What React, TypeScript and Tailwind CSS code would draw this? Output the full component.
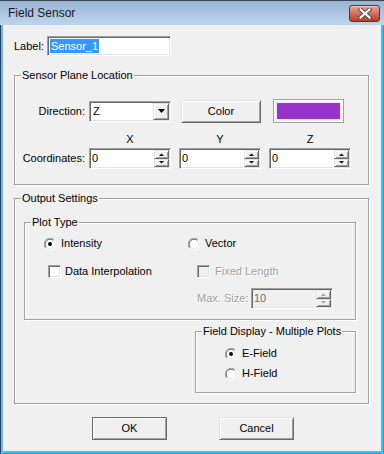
import React from "react";

const SUNKEN =
  "border border-t-[#a0a0a0] border-l-[#a0a0a0] border-b-white border-r-white shadow-[inset_1px_1px_0_#696969,inset_-1px_-1px_0_#e3e3e3] p-[1px]";
const RAISED =
  "border border-t-[#e3e3e3] border-l-[#e3e3e3] border-b-[#696969] border-r-[#696969] shadow-[inset_1px_1px_0_#fff,inset_-1px_-1px_0_#a0a0a0] bg-[#f0f0f0]";
const ETCHED = "relative border border-[#a0a0a0] shadow-[inset_1px_1px_0_#fff,1px_1px_0_#fff]";

function GroupTitle({ children }: { children: React.ReactNode }) {
  return (
    <span className="absolute top-[-7px] left-[6px] px-[1px] bg-[#f0f0f0] leading-[13px] whitespace-nowrap">
      {children}
    </span>
  );
}

function Arrow({ up, color = "#000" }: { up?: boolean; color?: string }) {
  return (
    <svg width="5" height="3" viewBox="0 0 5 3">
      <path d={up ? "M0 3 L5 3 L2.5 0.5 Z" : "M0 0 L5 0 L2.5 2.5 Z"} fill={color} />
    </svg>
  );
}

function Spin({ value, disabled }: { value: string; disabled?: boolean }) {
  return (
    <div className={`${SUNKEN} w-[82px] h-[21px] flex ${disabled ? "bg-[#f0f0f0]" : "bg-white"}`}>
      <div className={`flex-1 pl-[1px] leading-[17px] ${disabled ? "text-[#6d6d6d]" : ""}`}>{value}</div>
      <div className="flex flex-col w-[15px]">
        <div className={`${RAISED} flex-1 flex items-center justify-center`}>
          <Arrow up color={disabled ? "#a0a0a0" : "#000"} />
        </div>
        <div className={`${RAISED} flex-1 flex items-center justify-center`}>
          <Arrow color={disabled ? "#a0a0a0" : "#000"} />
        </div>
      </div>
    </div>
  );
}

function Radio({ checked }: { checked?: boolean }) {
  return (
    <svg width="12" height="12" viewBox="0 0 12 12" className="shrink-0">
      <circle cx="6" cy="6" r="5.5" fill="#fff" />
      <path d="M1.76 10.24 A6 6 0 0 1 10.24 1.76" transform="translate(0 0)" stroke="#a0a0a0" fill="none" />
      <path d="M10.24 1.76 A6 6 0 0 1 1.76 10.24" stroke="#fff" fill="none" />
      <path d="M2.47 9.53 A5 5 0 0 1 9.53 2.47" stroke="#696969" fill="none" />
      <path d="M9.53 2.47 A5 5 0 0 1 2.47 9.53" stroke="#e3e3e3" fill="none" />
      {checked && <circle cx="6" cy="6" r="2" fill="#000" />}
    </svg>
  );
}

function Check({ disabled }: { disabled?: boolean }) {
  return (
    <div className={`${SUNKEN} w-[13px] h-[13px] shrink-0 ${disabled ? "bg-[#f0f0f0]" : "bg-white"}`} />
  );
}

export default function App() {
  return (
    <div className="w-[384px] h-[454px] relative overflow-hidden bg-[#f0f0f0] text-[11px] leading-[13px] text-black font-['Liberation_Sans',Arial,sans-serif] shadow-[inset_1px_0_0_#2a4466,inset_3px_0_0_#6eb3ea,inset_-1px_0_0_#1f9fd8,inset_-3px_0_0_#34c4f2,inset_0_-1px_0_#1f9fd8,inset_0_-3px_0_#34c4f2]">
      {/* Title bar */}
      <div className="h-[25px] border-t border-[#3a4656] bg-gradient-to-b from-[#98b4d4] to-[#bed5ee] flex items-start justify-between pl-[8px] pr-[4px]">
        <span className="mt-[5px] text-[12px] leading-[14px] text-[#1a1a1a]">Field Sensor</span>
        <div className="mt-[4px] w-[31px] h-[17px] rounded-[3px] border border-[#6a2d2a] bg-gradient-to-b from-[#e6a795] via-[#d0705c] to-[#b93a22] flex items-center justify-center shadow-[inset_0_1px_0_#f3c8bb]">
          <svg width="14" height="11" viewBox="0 0 14 11">
            <path d="M2.5 1.5 L11.5 9.5 M11.5 1.5 L2.5 9.5" stroke="#4a4a4a" strokeWidth="4" strokeLinecap="square" />
            <path d="M2.5 1.5 L11.5 9.5 M11.5 1.5 L2.5 9.5" stroke="#fff" strokeWidth="2.2" strokeLinecap="square" />
          </svg>
        </div>
      </div>

      {/* Body */}
      <div className="flex flex-col pl-[14px]">
        {/* Label row */}
        <div className="mt-[11px] h-[20px] flex items-center">
          <span className="w-[33px]">Label:</span>
          <div className={`${SUNKEN} bg-white w-[124px] h-[20px] flex items-center pl-[2px]`}>
            <span className="bg-[#3399ff] text-white leading-[14px] px-[1px]">Sensor_1</span>
          </div>
        </div>

        {/* Sensor Plane Location */}
        <div className={`${ETCHED} mt-[19px] w-[355px] h-[110px] pt-[23px]`}>
          <GroupTitle>Sensor Plane Location</GroupTitle>
          <div className="flex items-center h-[24px]">
            <span className="w-[74px] text-right pr-[4px]">Direction:</span>
            <div className={`${SUNKEN} bg-white w-[82px] h-[21px] flex`}>
              <span className="flex-1 pl-[2px] leading-[17px]">Z</span>
              <div className={`${RAISED} w-[16px] flex items-center justify-center`}>
                <svg width="7" height="4" viewBox="0 0 7 4">
                  <path d="M0 0 L7 0 L3.5 4 Z" fill="#000" />
                </svg>
              </div>
            </div>
            <div className={`${RAISED} ml-[10px] w-[80px] h-[23px] flex items-center justify-center`}>Color</div>
            <div className="ml-[12px] w-[71px] h-[24px] border border-[#a0a0a0] shadow-[inset_1px_1px_0_#fff,inset_-1px_-1px_0_#fff] flex items-center justify-center">
              <div className="w-[63px] h-[16px] bg-[#9932cc]" />
            </div>
          </div>
          <div className="flex mt-[10px] h-[13px]">
            <div className="w-[74px]" />
            <div className="w-[82px] text-center">X</div>
            <div className="w-[82px] ml-[8px] text-center">Y</div>
            <div className="w-[82px] ml-[8px] text-center">Z</div>
          </div>
          <div className="flex items-center mt-[2px] h-[21px]">
            <span className="w-[74px] text-right pr-[4px]">Coordinates:</span>
            <Spin value="0" />
            <div className="ml-[8px]">
              <Spin value="0" />
            </div>
            <div className="ml-[8px]">
              <Spin value="0" />
            </div>
          </div>
        </div>

        {/* Output Settings */}
        <div className={`${ETCHED} mt-[13px] w-[355px] h-[206px] pt-[23px] pl-[9px]`}>
          <GroupTitle>Output Settings</GroupTitle>

          {/* Plot Type */}
          <div className={`${ETCHED} w-[332px] h-[98px] pt-[14px]`}>
            <GroupTitle>Plot Type</GroupTitle>
            <div className="flex items-center h-[13px]">
              <div className="w-[163px] pl-[19px] flex items-center">
                <Radio checked />
                <span className="ml-[5px]">Intensity</span>
              </div>
              <Radio />
              <span className="ml-[5px]">Vector</span>
            </div>
            <div className="flex items-center h-[13px] mt-[15px]">
              <div className="w-[172px] pl-[23px] flex items-center">
                <Check />
                <span className="ml-[4px]">Data Interpolation</span>
              </div>
              <Check disabled />
              <span className="ml-[5px] text-[#a0a0a0] [text-shadow:1px_1px_0_#fff]">Fixed Length</span>
            </div>
            <div className="flex items-center h-[21px] mt-[10px]">
              <div className="w-[172px]" />
              <span className="w-[54px] text-[#a0a0a0] [text-shadow:1px_1px_0_#fff]">Max. Size:</span>
              <Spin value="10" disabled />
            </div>
          </div>

          {/* Field Display */}
          <div className={`${ETCHED} mt-[11px] ml-[171px] w-[161px] h-[62px] pt-[15px] pl-[29px]`}>
            <GroupTitle>Field Display - Multiple Plots</GroupTitle>
            <div className="flex items-center h-[13px]">
              <Radio checked />
              <span className="ml-[5px]">E-Field</span>
            </div>
            <div className="flex items-center h-[13px] mt-[7px]">
              <Radio />
              <span className="ml-[5px]">H-Field</span>
            </div>
          </div>
        </div>

        {/* Buttons */}
        <div className="flex mt-[13px]">
          <div className={`${RAISED} ml-[78px] w-[75px] h-[23px] flex items-center justify-center outline outline-1 outline-[#696969] -outline-offset-1`}>
            OK
          </div>
          <div className={`${RAISED} ml-[52px] w-[75px] h-[23px] flex items-center justify-center`}>Cancel</div>
        </div>
      </div>
    </div>
  );
}
